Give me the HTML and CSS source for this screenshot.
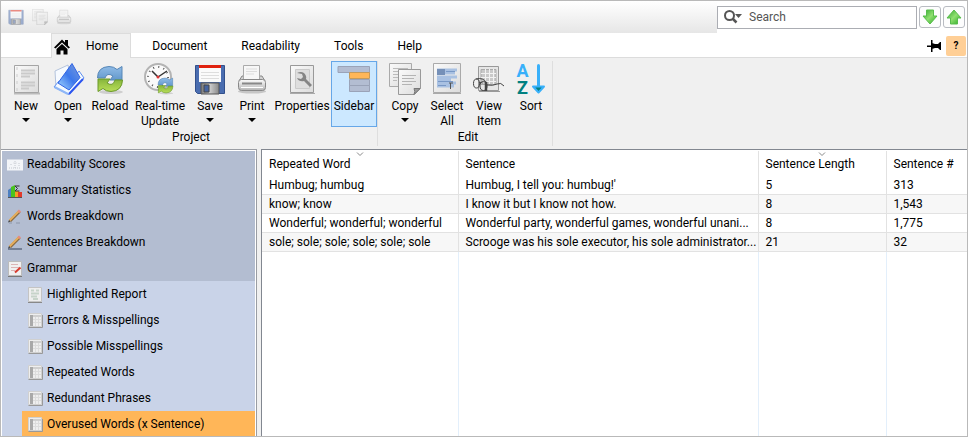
FILE: index.html
```html
<!DOCTYPE html>
<html lang="en">
<head>
<meta charset="utf-8">
<meta name="viewport" content="width=device-width, initial-scale=1">
<title>Overused Words (x Sentence)</title>
<link rel="stylesheet" href="styles.css">
</head>
<body>
<svg class="defs" width="0" height="0" aria-hidden="true">
  <defs>
    <linearGradient id="paper" x1="0" y1="0" x2="1" y2="1"><stop offset="0" stop-color="#fafafa"/><stop offset="1" stop-color="#dcdcdc"/></linearGradient>
    <linearGradient id="metal" x1="0" y1="0" x2="1" y2="0"><stop offset="0" stop-color="#777"/><stop offset=".5" stop-color="#ccc"/><stop offset="1" stop-color="#888"/></linearGradient>
    <linearGradient id="blue" x1="0" y1="0" x2="0" y2="1"><stop offset="0" stop-color="#8fbbe6"/><stop offset="1" stop-color="#6398cc"/></linearGradient>
    <linearGradient id="green" x1="0" y1="0" x2="0" y2="1"><stop offset="0" stop-color="#86b53c"/><stop offset="1" stop-color="#b9de58"/></linearGradient>
    <linearGradient id="folder" x1="0" y1="1" x2="1" y2="0"><stop offset="0" stop-color="#a9dcff"/><stop offset=".5" stop-color="#3c78ec"/><stop offset="1" stop-color="#7d9bd8"/></linearGradient>
    <linearGradient id="body" x1="0" y1="0" x2="0" y2="1"><stop offset="0" stop-color="#fcfcfc"/><stop offset="1" stop-color="#b4b4b4"/></linearGradient>
    <linearGradient id="leaf" x1="0" y1="0" x2="1" y2="1"><stop offset="0" stop-color="#2fa52a"/><stop offset=".5" stop-color="#8fe070"/><stop offset="1" stop-color="#27a81f"/></linearGradient>
    <symbol id="i-floppy" viewBox="0 0 32 32">
      <path d="M1.500 2.500h29v28h-27l-2-2z" fill="#4a6db0" stroke="#32508c"/>
      <path d="M5 3h22v16H5z" fill="#fafafa"/><path d="M5 2h22v3H5z" fill="#e0220f"/>
      <path d="M7 9.500h18M7 12.500h18M7 15.500h18" stroke="#ddd"/>
      <path d="M7 20h18v11H7z" fill="url(#metal)" stroke="#555"/><path d="M10 22h5v7h-5z" fill="#4664a0" stroke="#444"/>
    </symbol>
    <symbol id="i-printer" viewBox="0 0 32 32">
      <ellipse cx="16" cy="28.500" rx="14" ry="2" fill="#c6c6c6"/>
      <path d="M6 13h20l3 5H3z" fill="#d2d2d2" stroke="#888"/>
      <path d="M7.500 2.500h16v14h-16z" fill="#f7f7f7" stroke="#aaa"/><path d="M10 6h11M10 8.500h11M10 11h8" stroke="#ddd"/>
      <rect x="2.500" y="16.500" width="27" height="11" rx="3" fill="url(#body)" stroke="#888"/>
      <path d="M6 20.500h20" stroke="#888" stroke-width="2"/><path d="M5 24.500h22" stroke="#fff"/>
    </symbol>
    <symbol id="i-copy" viewBox="0 0 32 32">
      <path d="M.500.500h22v23H.500z" fill="url(#paper)" stroke="#aaa"/>
      <path d="M4 5.500h15M4 8.500h15M4 11.500h5M4 14.500h5M4 17.500h4" stroke="#bbb"/>
      <path d="M9.500 6.500h22v19l-6 6h-16z" fill="url(#paper)" stroke="#999"/>
      <path d="M13 12.500h14M13 15.500h12M13 18.500h14M13 21.500h10" stroke="#b4b4b4"/>
      <path d="M31 25.500l-6 6q1.500-3 0-6z" fill="#999" stroke="#777"/>
    </symbol>
    <symbol id="i-reload" viewBox="0 0 32 32">
      <ellipse cx="17" cy="29" rx="12" ry="2" fill="#cfcfcf"/>
      <path d="M3.500 15Q3.500 4 15 3.500q5 0 8 3l5-3V17H16l3-4q-6-4-8 2z" fill="url(#blue)" stroke="#5787b7"/>
      <path d="M28.500 17Q28 28 17 28.500q-5 0-8-3l-5 3V16h12l-3 4q6 4 8-3z" fill="url(#green)" stroke="#6b9a2b"/>
    </symbol>
    <symbol id="i-grid" viewBox="0 0 16 16">
      <path d="M1.500 14.500h14V2" fill="none" stroke="#999"/>
      <path d="M1.500.500h13v13h-13z" fill="#eee" stroke="#d0d0d0"/>
      <path d="M3 2h11v2H3z" fill="#cfcfcf"/><path d="M3 2h3v11H3z" fill="#a9a9a9"/>
      <path d="M6 6.500h8M6 9.500h8M8.500 4v9M11.500 4v9" stroke="#dcdcdc"/>
    </symbol>
  </defs>
</svg>
<div class="app">
  <header class="titlebar">
    <div class="quick">
      <button type="button" aria-label="Save document"><svg viewBox="0 0 32 32"><use href="#i-floppy"/></svg></button>
      <button type="button" aria-label="Copy document"><svg viewBox="0 0 32 32"><use href="#i-copy"/></svg></button>
      <button type="button" aria-label="Print document"><svg viewBox="0 0 32 32"><use href="#i-printer"/></svg></button>
    </div>
    <div class="finder">
      <div class="searchbox">
        <svg class="lens" viewBox="0 0 20 16"><circle cx="6.500" cy="6.500" r="4.500" fill="none" stroke="#555" stroke-width="2"/><path d="M9.500 9.500l4 4" stroke="#555" stroke-width="2.500"/><path d="M12 5h7l-3.500 4z" fill="#555"/></svg>
        <input type="text" placeholder="Search" aria-label="Search">
      </div>
      <button type="button" class="step" aria-label="Find next"><svg viewBox="0 0 16 16"><path d="M4.500 1h7v6h3.500l-7 8-7-8h3.500z" fill="url(#leaf)" stroke="#58bd4c"/></svg></button>
      <button type="button" class="step" aria-label="Find previous"><svg viewBox="0 0 16 16"><path d="M4.500 15h7V9h3.500L8 1 1 9h3.500z" fill="url(#leaf)" stroke="#58bd4c"/></svg></button>
    </div>
  </header>

  <nav class="tabs">
    <a class="tab home" href="#home" aria-current="page"><svg viewBox="0 0 16 16"><path d="M0 8.500L8 .500l3 3V1h3v5.500l2 2-1.500 1L8 3.500l-6.500 6z"/><path d="M2.500 10L8 5l5.500 5v5.500h-4v-4h-3v4h-4z"/></svg>Home</a>
    <a class="tab" href="#document">Document</a>
    <a class="tab" href="#readability">Readability</a>
    <a class="tab" href="#tools">Tools</a>
    <a class="tab" href="#help">Help</a>
    <div class="tab-tools">
      <button type="button" class="pin" aria-label="Pin ribbon"><svg viewBox="0 0 14 12"><path d="M0 5.500h5v1.500H0zM4 0h1.500v12H4zM5 3l3 1h3l2-2h1v8h-1l-2-2H8L5 9z"/></svg></button>
      <button type="button" class="help">?</button>
    </div>
  </nav>

  <section class="ribbon">
    <div class="group">
      <div class="tools">
        <button type="button" class="tool"><svg viewBox="0 0 32 32"><path d="M4 30.500h26" stroke="#bbb" stroke-width="2"/><path d="M4.500 2.500h24v27h-24z" fill="url(#paper)" stroke="#a5a5a5"/><path d="M7 4v24" stroke="#ccc" stroke-dasharray="3 4"/><path d="M11 7.500h14M11 10.500h14M11 13.500h9M11 19.500h14M11 22.500h14M11 25.500h8" stroke="#cacaca" stroke-width="2"/></svg><span>New</span><i class="caret"></i></button>
        <button type="button" class="tool"><svg viewBox="0 0 32 32"><path d="M3 8l13-6 3 16-15 7z" fill="#f6faff" stroke="#b4c4dd"/><path d="M2 24l15 7.500L32 15l-5-7-12 16-8-6z" fill="#f4faff" stroke="#5b8cf0"/><path d="M17 31L31 16" stroke="#2b54ef" stroke-width="2"/><path d="M2.500 24L16 31" stroke="#8fb7f7" stroke-width="2"/><path d="M20 .500l8 14L17 27 6 20z" fill="url(#folder)" stroke="#2f64e6"/></svg><span>Open</span><i class="caret"></i></button>
        <button type="button" class="tool"><svg viewBox="0 0 32 32"><use href="#i-reload"/></svg><span>Reload</span></button>
        <button type="button" class="tool wide"><svg viewBox="0 0 32 32"><circle cx="14" cy="14" r="13" fill="#fafafa" stroke="#b4b4b4" stroke-width="2"/><circle cx="14" cy="14" r="10" fill="none" stroke="#555" stroke-width="2" stroke-dasharray="1 4.236"/><path d="M14 14l9-6M14 14L8 8" stroke="#333" stroke-width="1.500"/><circle cx="14" cy="14" r="1.500" fill="#d33"/><use href="#i-reload" x="12" y="13" width="19" height="19"/></svg><span>Real-time Update</span></button>
        <button type="button" class="tool"><svg viewBox="0 0 32 32"><use href="#i-floppy"/></svg><span>Save</span><i class="caret"></i></button>
        <button type="button" class="tool"><svg viewBox="0 0 32 32"><use href="#i-printer"/></svg><span>Print</span><i class="caret"></i></button>
        <button type="button" class="tool wide"><svg viewBox="0 0 32 32"><path d="M4 30.500h25" stroke="#aaa"/><path d="M4.500 2.500h23v27h-23z" fill="url(#paper)" stroke="#999"/><path d="M9.500 6.500h14v19h-14z" fill="#dedede" stroke="#cacaca"/><path d="M11 10q4-2 7 0 3 3 2 6l6 6-2 2-6-6q-5 1-7-3l4 1 2-2-1-3z" fill="#858585"/></svg><span>Properties</span></button>
        <button type="button" class="tool pressed" aria-pressed="true"><svg viewBox="0 0 32 32"><path d="M0 3.500h31.500v6H0z" fill="#b3bdd2" stroke="#9aa3b8"/><path d="M11.500 9.500h20v6h-20z" fill="#ffb658" stroke="#c49a5c"/><path d="M11.500 16.500h20v6h-20zM11.500 22.500h20v6h-20z" fill="#b3bdd2" stroke="#9aa3b8"/></svg><span>Sidebar</span></button>
      </div>
      <div class="group-name">Project</div>
    </div>
    <div class="group">
      <div class="tools">
        <button type="button" class="tool"><svg viewBox="0 0 32 32"><use href="#i-copy"/></svg><span>Copy</span><i class="caret"></i></button>
        <button type="button" class="tool"><svg viewBox="0 0 32 32"><path d="M2 30.500h28" stroke="#aaa"/><path d="M2.500.500h27v29h-27z" fill="url(#paper)" stroke="#aaa"/><path d="M6 7h20M6 10h18M6 14h20M6 17h14M6 20h19M6 23h17" stroke="#a9c1e2" stroke-width="3"/><path d="M6 6h8v6H6z" fill="#7590b8"/><path d="M15 8.500h9M7 18.500h15M7 22.500h8" stroke="#7898c6"/><path d="M18 20h4M19.500 20v6" stroke="#555"/></svg><span>Select All</span></button>
        <button type="button" class="tool"><svg viewBox="0 0 32 32"><path d="M6 28.500h21" stroke="#999"/><path d="M5.500 3.500h20v24h-20z" fill="#e6e6e6" stroke="#999"/><path d="M8 6.500h15v15H8z" fill="#c9c9c9" stroke="#aaa"/><path d="M8 10.500h15M8 14.500h15M8 18.500h15M12.500 6v15M16.500 6v15M20.500 6v15" stroke="#f2f2f2"/><g fill="none" stroke="#444"><ellipse cx="3.500" cy="20.500" rx="3" ry="4.500"/><ellipse cx="10.500" cy="23" rx="3.500" ry="4.500"/><path d="M6.500 20q2-2 3 0M3 16q7-2 11 4M14 22q6 1 10-1t7 2"/><path d="M13 19v9" stroke-width="2.500"/></g></svg><span>View Item</span></button>
        <button type="button" class="tool"><svg viewBox="0 0 32 32"><text class="glyph" x="7.500" y="14" fill="#38b0fa">A</text><text class="glyph" x="7.500" y="31" fill="#008080">Z</text><path d="M23.500 2.500v24" stroke="#38b0fa" stroke-width="3" stroke-linecap="round"/><path d="M18 23.500h11l-5.500 6z" fill="#008080" stroke="#38b0fa" stroke-width="2" stroke-linejoin="round"/></svg><span>Sort</span></button>
      </div>
      <div class="group-name">Edit</div>
    </div>
  </section>

  <main class="work">
    <aside class="sidebar">
      <a class="item" href="#scores"><svg viewBox="0 0 16 16"><path d="M0 2.500h16v11H0z" fill="#f3f5f8"/><path d="M2 11h12M4 7v2M8 4v7M6.500 6h3M12 6v3" stroke="#c5c9d0" stroke-dasharray="1 1"/></svg>Readability Scores</a>
      <a class="item" href="#summary"><svg viewBox="0 0 16 16"><path d="M1 7l3-2v9H1z" fill="#4d7fc0"/><path d="M4 4l4-2v12H4z" fill="#49c41f"/><path d="M8 8h4v6H8z" fill="#f0a020"/><path d="M11 9h4v5h-4z" fill="#e23a2c"/><path d="M12.500 3H8l2.500 2.500L8 8h4.500" fill="none" stroke="#333"/><path d="M1 14.500h14" stroke="#555"/></svg>Summary Statistics</a>
      <a class="item" href="#words"><svg viewBox="0 0 16 16"><path d="M2 14h3M9 14h4" stroke="#8c96a8"/><path d="M12.500 2.500L3 12" stroke="#8a6a40" stroke-width="3"/><path d="M12 2L2.500 11.500" stroke="#e6ae5e" stroke-width="2"/><path d="M13 1.500l-1.500 1.500" stroke="#e78b80" stroke-width="3"/><path d="M1 13.500l1-2.500 1.500 1.500z" fill="#444"/></svg>Words Breakdown</a>
      <a class="item" href="#sentences"><svg viewBox="0 0 16 16"><path d="M1 14h14" stroke="#737f95" stroke-width="2"/><path d="M12.500 2.500L3 12" stroke="#8a6a40" stroke-width="3"/><path d="M12 2L2.500 11.500" stroke="#e6ae5e" stroke-width="2"/><path d="M13 1.500l-1.500 1.500" stroke="#e78b80" stroke-width="3"/><path d="M1 13.500l1-2.500 1.500 1.500z" fill="#444"/></svg>Sentences Breakdown</a>
      <a class="item" href="#grammar"><svg viewBox="0 0 16 16"><path d="M1.500.500h13v14h-13z" fill="#f0f0f0" stroke="#bbb"/><path d="M1 15.500h14" stroke="#777"/><path d="M4 3.500h7M4 6.500h8M4 9.500h4" stroke="#dcb4b4"/><path d="M13.500 6.500L8 11.500" stroke="#d73a2e" stroke-width="2"/></svg>Grammar</a>
      <div class="sub">
        <a class="item" href="#report"><svg viewBox="0 0 16 16"><path d="M1 15.500h14" stroke="#888"/><path d="M1.500.500h13v14h-13z" fill="#eee" stroke="#c4c4c4"/><path d="M4 3.500h3M9 3.500h3M4 6.500h8M4 9.500h6M6 12h5" stroke="#c6d3c9" stroke-width="2"/></svg>Highlighted Report</a>
        <a class="item" href="#errors"><svg viewBox="0 0 16 16"><use href="#i-grid"/></svg>Errors &amp; Misspellings</a>
        <a class="item" href="#possible"><svg viewBox="0 0 16 16"><use href="#i-grid"/></svg>Possible Misspellings</a>
        <a class="item" href="#repeated"><svg viewBox="0 0 16 16"><use href="#i-grid"/></svg>Repeated Words</a>
        <a class="item" href="#redundant"><svg viewBox="0 0 16 16"><use href="#i-grid"/></svg>Redundant Phrases</a>
        <a class="item selected" href="#overused" aria-current="true"><svg viewBox="0 0 16 16"><use href="#i-grid"/></svg>Overused Words (x Sentence)</a>
      </div>
    </aside>
    <div class="list">
      <table>
        <colgroup><col class="c-word"><col class="c-sentence"><col class="c-length"><col class="c-number"></colgroup>
        <thead><tr>
          <th scope="col" class="sorted">Repeated Word<svg viewBox="0 0 8 5"><path d="M1 .500l3 3 3-3" fill="none" stroke="#888"/></svg></th>
          <th scope="col">Sentence</th>
          <th scope="col" class="sorted">Sentence Length<svg viewBox="0 0 8 5"><path d="M1 .500l3 3 3-3" fill="none" stroke="#888"/></svg></th>
          <th scope="col">Sentence #</th>
        </tr></thead>
        <tbody>
          <tr><td>Humbug; humbug</td><td>Humbug, I tell you: humbug!'</td><td>5</td><td>313</td></tr>
          <tr><td>know; know</td><td>I know it but I know not how.</td><td>8</td><td>1,543</td></tr>
          <tr><td>Wonderful; wonderful; wonderful</td><td>Wonderful party, wonderful games, wonderful unani...</td><td>8</td><td>1,775</td></tr>
          <tr><td>sole; sole; sole; sole; sole; sole</td><td>Scrooge was his sole executor, his sole administrator...</td><td>21</td><td>32</td></tr>
          <tr class="rest" aria-hidden="true"><td></td><td></td><td></td><td></td></tr>
        </tbody>
      </table>
    </div>
  </main>
</div>
</body>
</html>
```
FILE: styles.css
```css
* { box-sizing: border-box; }

body {
  margin: 0;
  font: 12px/15px Roboto, "Open Sans", sans-serif;
  color: #000;
}

button, input { font: inherit; color: inherit; }
button { padding: 0; border: 0; background: none; }
a { color: inherit; text-decoration: none; }
svg { display: block; flex: none; }
.defs { position: absolute; }

.app {
  display: flex;
  flex-direction: column;
  height: 100vh;
  border: 1px solid #b9b9b9;
  background: #f0f0f0;
  overflow: hidden;
}

.titlebar {
  display: flex;
  flex: none;
  height: 32px;
  background: linear-gradient(#fff, #e6e6e6);
}
.quick { display: flex; flex: 1; align-items: center; gap: 8px; padding-left: 7px; }
.quick svg { width: 16px; height: 16px; opacity: .5; }
.finder { display: flex; align-items: center; gap: 2px; padding-right: 2px; background: #fff; }
.searchbox {
  display: flex;
  align-items: center;
  width: 200px;
  height: 23px;
  padding-left: 5px;
  border: 1px solid #abadb3;
  background: #fff;
}
.lens { width: 20px; height: 16px; }
.searchbox input { flex: 1; min-width: 0; padding: 0 6px; border: 0; outline: 0; background: none; }
.searchbox input::placeholder { color: #555; opacity: 1; }
.step {
  display: grid;
  place-items: center;
  width: 22px;
  height: 22px;
  border: 1px solid #b9bcc2;
  border-radius: 3px;
  background: #fdfdfd;
}
.step svg { width: 16px; height: 16px; }

.tabs {
  display: flex;
  flex: none;
  height: 25px;
  padding-left: 50px;
  background: #fff;
  box-shadow: inset 0 -1px #dcdcdc;
}
.tab { display: flex; align-items: center; padding: 2px 17px 0; }
.tab.home {
  gap: 16px;
  margin-right: 4px;
  padding: 1px 12px 0 2px;
  border: 1px solid #dcdcdc;
  border-bottom: 0;
  background: #f0f0f0;
}
.tab svg { width: 16px; height: 16px; }
.tab-tools { display: flex; align-items: center; gap: 5px; margin-left: auto; padding-right: 1px; }
.pin svg { width: 14px; height: 12px; }
.help { width: 20px; height: 20px; border-radius: 2px; background: #ffcf96; font-size: 10px; font-weight: bold; }

.ribbon { display: flex; flex: none; height: 91px; padding: 3px 0 3px 4px; }
.group { border-right: 1px solid #dedede; }
.group + .group { padding-left: 6px; }
.tools { display: flex; height: 66px; }
.tool {
  display: flex;
  flex-direction: column;
  align-items: center;
  width: 42px;
  padding-top: 1px;
  border: 1px solid transparent;
}
.tool.wide { width: 58px; }
.tool.pressed { width: 46px; border-color: #66a7e8; background: #cce8ff; }
.tool svg { width: 32px; height: 32px; margin-bottom: 4px; overflow: visible; }
.tool span { text-align: center; }
.glyph { font: bold 18px Roboto, sans-serif; text-anchor: middle; }
.caret { margin-top: 4px; border: 4px solid transparent; border-top-color: #000; border-bottom: 0; }
.group-name { padding-top: 3px; text-align: center; }

.work { display: flex; flex: 1; gap: 4px; min-height: 0; }
.sidebar {
  width: 256px;
  padding: 1px 1px 0;
  border: solid #9a9da3;
  border-width: 1px 1px 0 0;
  background: #fff;
  overflow: hidden;
}
.item { display: flex; align-items: center; gap: 4px; height: 26px; padding: 1px 0 0 5px; background: #b3bdd1; }
.item svg { width: 16px; height: 16px; }
.sub { padding-left: 20px; background: #c9d3e8; }
.sub .item { background: none; }
.sub .selected { background: #ffb658; }

.list { flex: 1; min-width: 0; padding-top: 1px; border: solid #828790; border-width: 1px 0 0 1px; background: #fff; }
table { width: 100%; height: 100%; border-collapse: collapse; table-layout: fixed; }
.c-word { width: 196px; }
.c-length { width: 128px; }
.c-number { width: 81px; }
th, td { height: 19px; padding: 2px 0 0 7px; overflow: hidden; font-weight: normal; text-align: left; white-space: nowrap; }
th + th, td + td { border-left: 1px solid #e2e2e2; }
th { position: relative; height: 24px; }
th svg { position: absolute; top: 1px; left: 50%; width: 8px; height: 5px; margin-left: -4px; }
td { border-bottom: 1px solid #e2e2e2; }
tbody tr:nth-child(even) { background: #f7f7f7; }
.rest td { height: auto; border-bottom: 0; }
.rest td + td { border-left-color: #e3effb; }
```
